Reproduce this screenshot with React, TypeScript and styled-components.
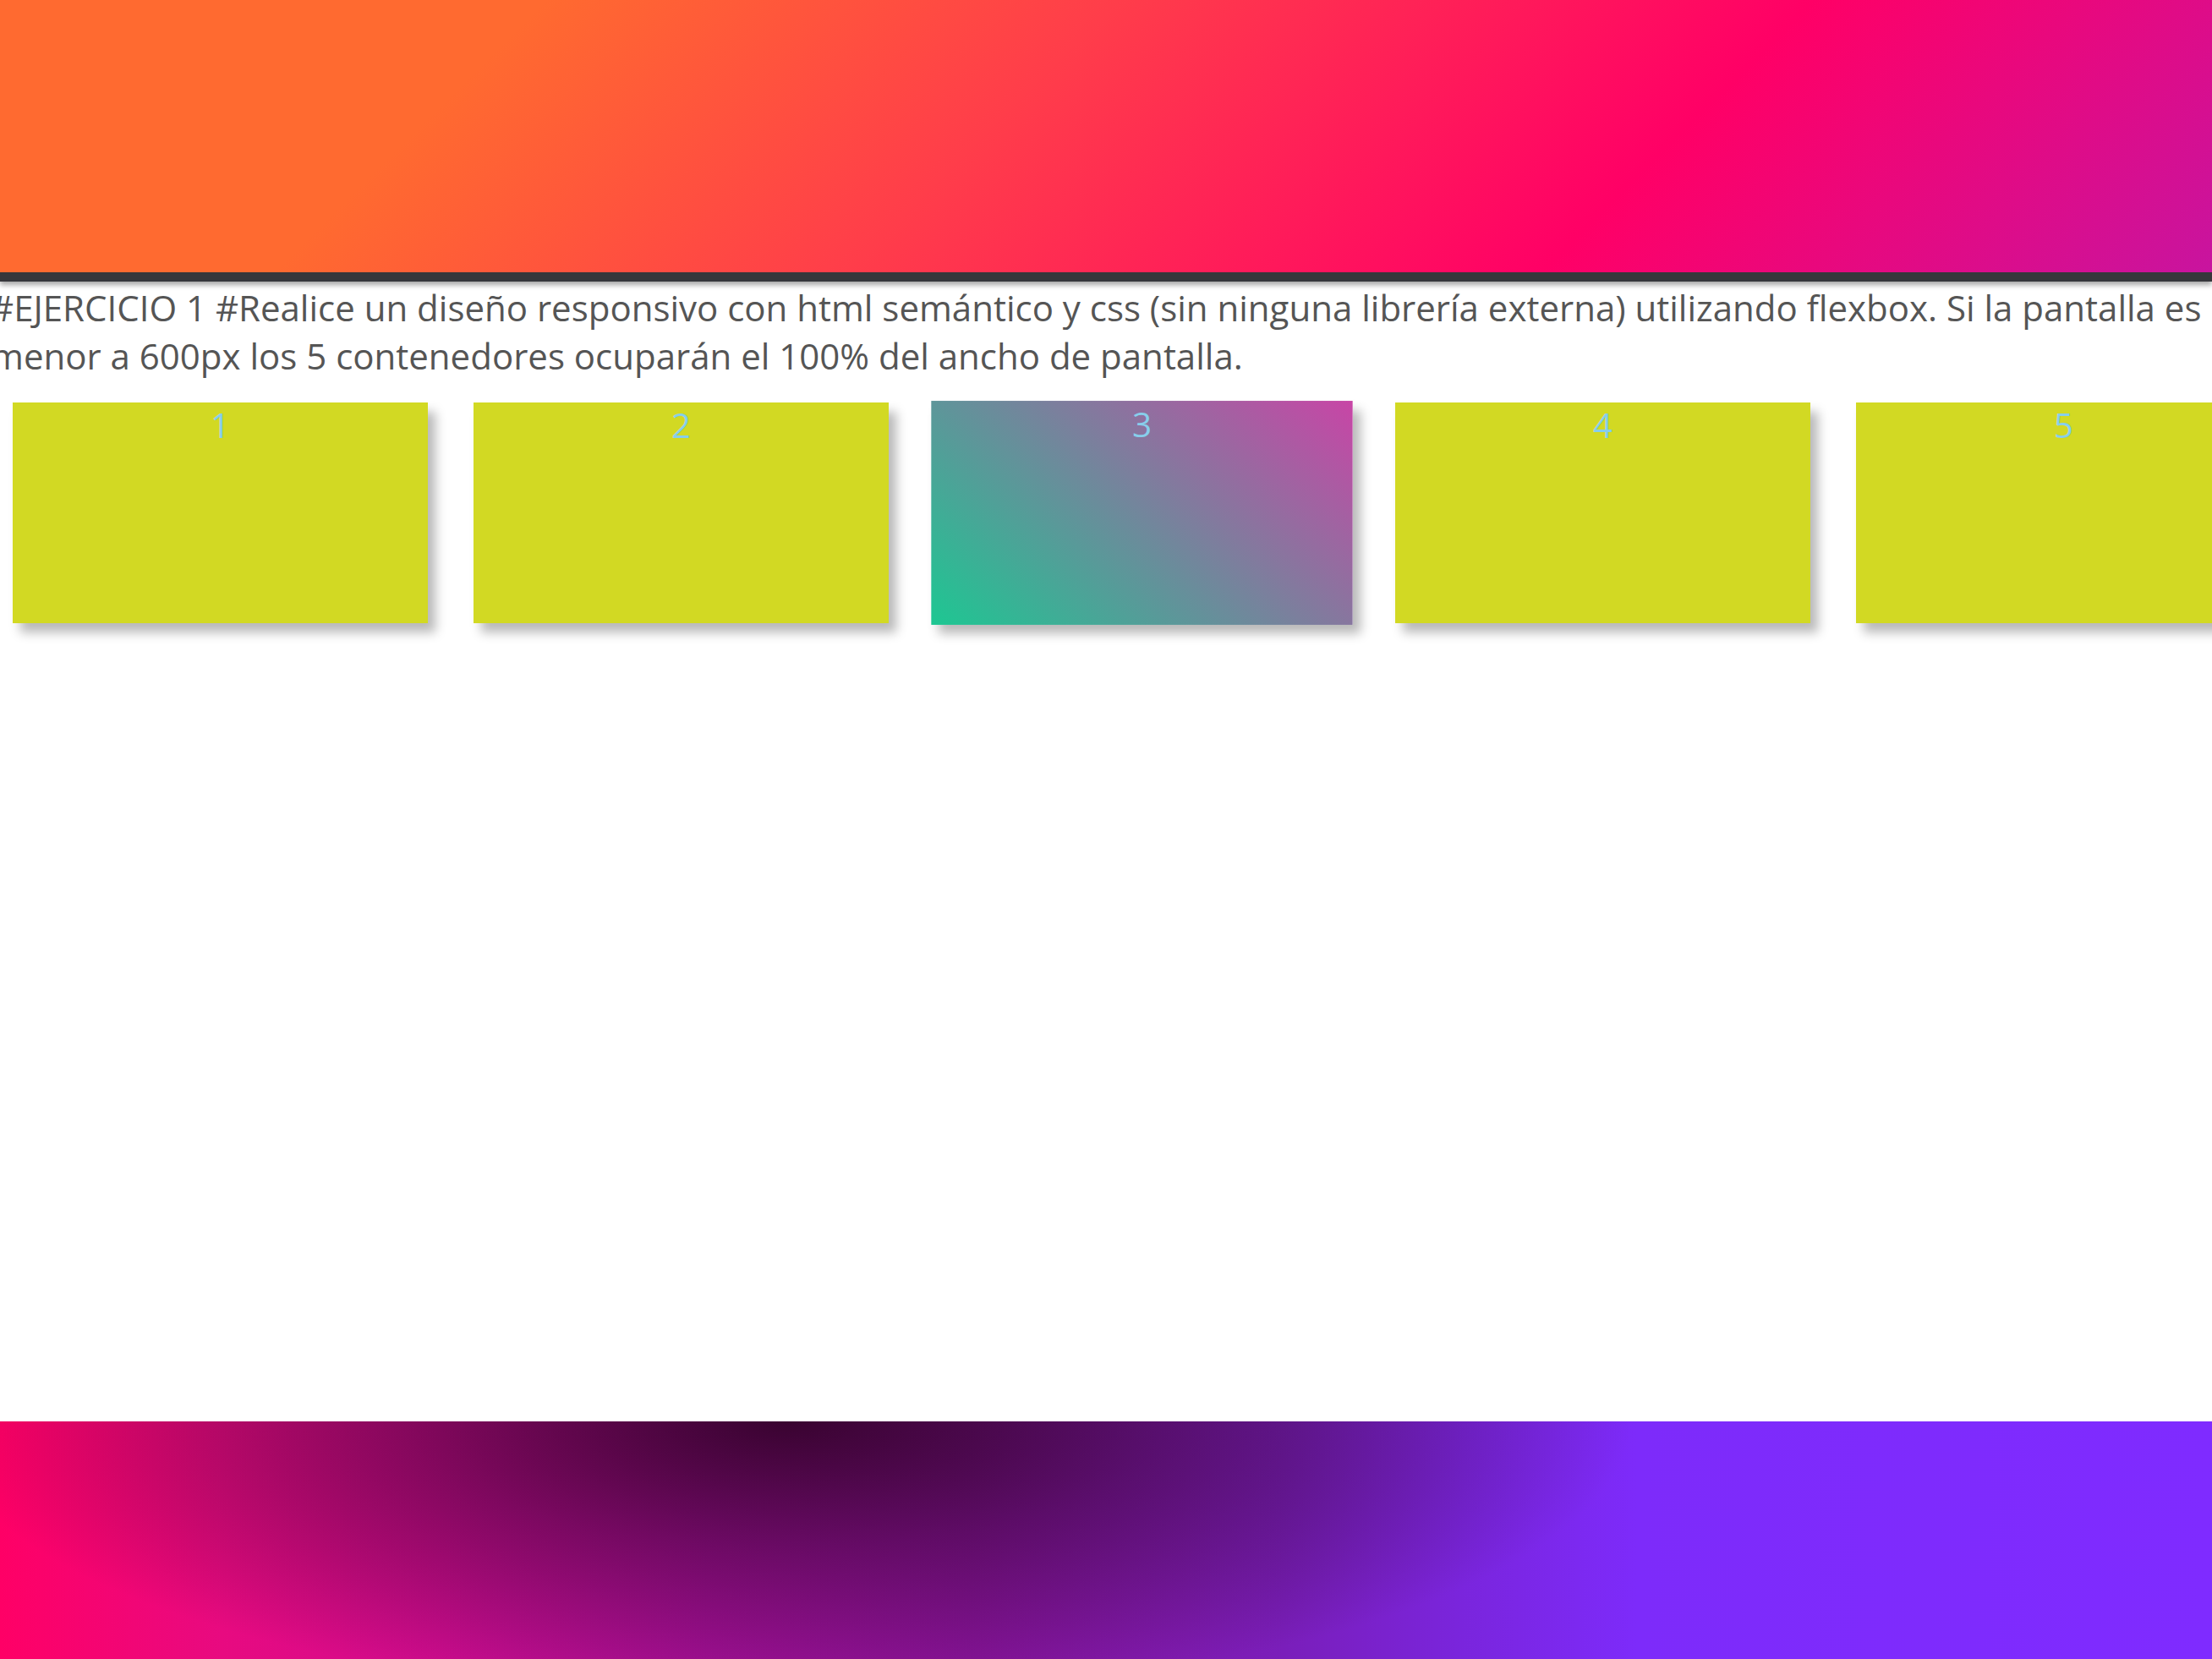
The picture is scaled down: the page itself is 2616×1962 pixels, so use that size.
import React from "react";
import styled, { createGlobalStyle } from "styled-components";

const Global = createGlobalStyle`
  html, body {
    margin: 0;
    padding: 0;
    overflow: hidden;
    background: #ffffff;
  }
  body {
    font-family: "Open Sans", "Noto Sans", sans-serif;
  }
`;

const Page = styled.div`
  display: flex;
  flex-direction: column;
  min-height: 1962px;
  width: 2616px;
  overflow: hidden;
`;

const Header = styled.header`
  height: 322px;
  border-bottom: 11px solid #36373b;
  box-shadow: 0 4px 6px rgba(0, 0, 0, 0.35);
  background: linear-gradient(135deg, #ff6a30 0%, #ff6a30 22%, #ff3d4a 45%, #ff0066 73%, #c8149f 100%);
  position: relative;
  z-index: 1;
`;

const Main = styled.main`
  flex: 1;
  display: flex;
  flex-direction: column;
`;

const Statement = styled.p`
  margin: 2px 0 0 -11px;
  font-size: 42px;
  line-height: 57px;
  color: #555555;
  font-family: "Open Sans", sans-serif;
`;

const Row = styled.section`
  display: flex;
  gap: 54px;
  padding-left: 15px;
  margin-top: 27px;
`;

const Box = styled.article<{ $special?: boolean }>`
  flex: 0 0 491px;
  height: 261px;
  background: ${(p) => (p.$special ? "linear-gradient(41deg, #1dc792 0%, #c845a6 100%)" : "#d2d923")};
  transform: ${(p) => (p.$special ? "scale(1.015)" : "none")};
  box-shadow: 9px 11px 12px rgba(0, 0, 0, 0.28);
  color: #87ceeb;
  font-size: 40px;
  line-height: 54.5px;
  text-align: center;
  font-family: "Open Sans", sans-serif;
`;

const Footer = styled.footer`
  height: 281px;
  background:
    radial-gradient(ellipse 1000px 330px at 930px 0px, rgba(35, 0, 25, 0.82) 0%, rgba(40, 2, 35, 0.45) 45%, rgba(60, 10, 60, 0) 100%),
    linear-gradient(90deg, #ff0066 0%, #e80a80 10%, #cf0c8f 20%, #a8109a 32%, #8a149d 44%, #7a1eba 58%, #7a25dc 66%, #7d2bfa 74%, #7f2bff 100%);
`;

export default function App() {
  const boxes = [1, 2, 3, 4, 5];
  return (
    <>
      <Global />
      <Page>
        <Header />
        <Main>
          <Statement>
            #EJERCICIO 1 #Realice un diseño responsivo con html semántico y css (sin ninguna librería externa)
            utilizando flexbox. Si la pantalla es menor a 600px los 5 contenedores ocuparán el 100% del ancho de
            pantalla.
          </Statement>
          <Row>
            {boxes.map((n) => (
              <Box key={n} $special={n === 3}>
                {n}
              </Box>
            ))}
          </Row>
        </Main>
        <Footer />
      </Page>
    </>
  );
}
